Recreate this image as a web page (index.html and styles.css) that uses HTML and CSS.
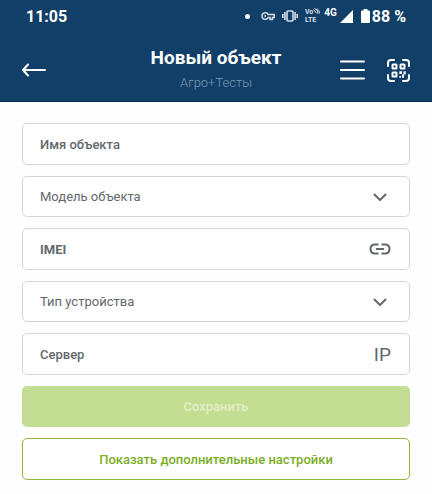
FILE: index.html
```html
<!DOCTYPE html>
<html lang="ru">
<head>
    <meta charset="UTF-8">
    <meta name="viewport" content="width=device-width, initial-scale=1.0">
    <title>Новый объект</title>
    <link rel="stylesheet" href="styles.css">
</head>
<body>
    <header class="header">
        <div class="status-bar">
            <time class="clock">11:05</time>
            <div class="status-icons">
                <span class="dot"></span>
                <svg class="key" width="14" height="10" viewBox="0 0 14 10" fill="none" stroke="currentColor" stroke-width="1.5">
                    <path d="M7.2 3.6A3.3 3.3 0 1 0 7.2 6.4H9V8.4H11.5V6.4H13.2V3.6Z"/>
                    <circle cx="4.1" cy="5" r="1" fill="currentColor" stroke="none"/>
                </svg>
                <svg class="vibrate" width="16" height="12" viewBox="0 0 16 12" fill="none" stroke="currentColor" stroke-width="1.6">
                    <rect x="5" y="1" width="6" height="10" rx="1"/>
                    <path d="M2.9 2V10M13.1 2V10M.8 4V8M15.2 4V8"/>
                </svg>
                <span class="volte">
                    <span>Vo<svg width="7" height="6" viewBox="0 0 7 6" fill="none" stroke="currentColor"><path d="M.5 1.5L4 5.5M1.5 .5Q5 1 5 5.5M4 .5Q6.5 2 6.5 5.5"/></svg></span>
                    <span>LTE</span>
                </span>
                <span class="network">4G</span>
                <svg class="signal" width="13" height="13" viewBox="0 0 13 13" fill="currentColor">
                    <path d="M13 0V13H0Z"/>
                </svg>
                <svg class="battery" width="9" height="14" viewBox="0 0 9 14" fill="currentColor">
                    <path d="M2.5 0H6.5V1.5H8Q9 1.5 9 2.5V13Q9 14 8 14H1Q0 14 0 13V2.5Q0 1.5 1 1.5H2.5Z"/>
                </svg>
                <span class="percent">88 %</span>
            </div>
        </div>
        <nav class="toolbar">
            <button type="button" class="icon-btn" aria-label="Назад">
                <svg width="24" height="14" viewBox="0 0 24 14" fill="none" stroke="currentColor" stroke-width="2" stroke-linecap="round" stroke-linejoin="round">
                    <path d="M23 7H1.2M6 1.5L1 7L6 12.5"/>
                </svg>
            </button>
            <div class="heading">
                <h1>Новый объект</h1>
                <p>Агро+Тесты</p>
            </div>
            <div class="actions">
                <button type="button" class="icon-btn" aria-label="Меню">
                    <svg width="25" height="20" viewBox="0 0 25 20" stroke="currentColor" stroke-width="2" stroke-linecap="round">
                        <path d="M1 1.5H24M1 10H24M1 18.5H24"/>
                    </svg>
                </button>
                <button type="button" class="icon-btn" aria-label="Сканировать QR-код">
                    <svg width="23" height="23" viewBox="0 0 23 23" fill="none" stroke="currentColor" stroke-width="2" stroke-linecap="round">
                        <path d="M1 7V4Q1 1 4 1H7M16 1H19Q22 1 22 4V7M22 16V19Q22 22 19 22H16M7 22H4Q1 22 1 19V16"/>
                        <rect x="5.5" y="5.5" width="4" height="4" rx=".5"/>
                        <rect x="13.5" y="5.5" width="4" height="4" rx=".5"/>
                        <rect x="5.5" y="13.5" width="4" height="4" rx=".5"/>
                        <path d="M12.3 12.3H15V15H12.3ZM16.5 12.3H18.7V15.5H16.5ZM12.3 17H14V18.7H12.3ZM15 15.5H17V18.7H15Z" fill="currentColor" stroke="none"/>
                    </svg>
                </button>
            </div>
        </nav>
    </header>

    <form class="form">
        <div class="field">
            <input type="text" id="name" placeholder="Имя объекта" aria-label="Имя объекта">
        </div>
        <div class="field field-select">
            <select id="model" aria-label="Модель объекта">
                <option value="">Модель объекта</option>
            </select>
            <svg class="field-icon" width="22" height="14" viewBox="0 0 22 14" fill="none" stroke="currentColor" stroke-width="2" stroke-linecap="round" stroke-linejoin="round">
                <path d="M5.5 4.5L11 10L16.5 4.5"/>
            </svg>
        </div>
        <div class="field">
            <input type="text" id="imei" class="imei" placeholder="IMEI" aria-label="IMEI">
            <svg class="field-icon" width="22" height="14" viewBox="0 0 22 14" fill="none" stroke="currentColor" stroke-width="2">
                <path d="M9.5 2.5H6Q1.5 2.5 1.5 7T6 11.5H9.5M12.5 2.5H16Q20.5 2.5 20.5 7T16 11.5H12.5M7 7H15"/>
            </svg>
        </div>
        <div class="field field-select">
            <select id="device" aria-label="Тип устройства">
                <option value="">Тип устройства</option>
            </select>
            <svg class="field-icon" width="22" height="14" viewBox="0 0 22 14" fill="none" stroke="currentColor" stroke-width="2" stroke-linecap="round" stroke-linejoin="round">
                <path d="M5.5 4.5L11 10L16.5 4.5"/>
            </svg>
        </div>
        <div class="field">
            <input type="text" id="server" placeholder="Сервер" aria-label="Сервер">
            <span class="field-icon ip">IP</span>
        </div>
        <button type="submit" class="btn btn-save" disabled>Сохранить</button>
        <button type="button" class="btn btn-more">Показать дополнительные настройки</button>
    </form>
</body>
</html>
```
FILE: styles.css
```css
* {
    box-sizing: border-box;
}
body {
    margin: 0;
    font-family: Roboto, sans-serif;
    font-size: 13px;
    color: #63686d;
    background-color: #fefefe;
}
button, input, select {
    font: inherit;
}
.header {
    color: #fff;
    background-color: #123f68;
    border-bottom: 1px solid #052c50;
}
.status-bar {
    display: flex;
    align-items: center;
    justify-content: space-between;
    height: 32px;
    padding: 0 26px;
    font-size: 16px;
    font-weight: bold;
}
.status-icons {
    display: flex;
    align-items: center;
}
.dot {
    width: 5px;
    height: 5px;
    margin-right: 11px;
    border-radius: 50%;
    background: #fff;
}
.key, .vibrate {
    margin-right: 7px;
    color: #d3dee8;
}
.volte {
    display: flex;
    flex-direction: column;
    margin-right: 4px;
    font-size: 7px;
    line-height: 8px;
    color: #d3dee8;
}
.network {
    margin-right: 3px;
    padding-bottom: 6px;
    font-size: 10px;
    line-height: 12px;
}
.signal {
    margin-right: 8px;
}
.battery {
    margin-right: 2px;
}
.toolbar {
    display: grid;
    grid-template-columns: 1fr auto 1fr;
    align-items: center;
    height: 69px;
    padding: 7px 22px 0;
}
.icon-btn {
    display: flex;
    justify-self: start;
    padding: 0;
    border: none;
    color: inherit;
    background: none;
    cursor: pointer;
}
.heading {
    text-align: center;
}
.heading h1 {
    margin: 0;
    font-size: 19px;
    line-height: 26px;
}
.heading p {
    margin: 0;
    font-size: 13px;
    font-weight: 300;
    line-height: 24px;
    color: #7d9ab4;
}
.actions {
    display: flex;
    align-items: center;
    justify-content: flex-end;
    gap: 22px;
}
.form {
    display: flex;
    flex-direction: column;
    gap: 11px;
    padding: 21px 22px;
}
.field {
    display: flex;
    align-items: center;
    height: 42px;
    padding: 0 18px 0 17px;
    border: 1px solid #d6d6d6;
    border-radius: 5px;
    background: #fff;
}
.field-select {
    height: 41px;
}
.field input, .field select {
    flex: 1;
    min-width: 0;
    padding: 0;
    border: none;
    outline: none;
    color: inherit;
    background: none;
    appearance: none;
}
.field input {
    font-weight: 500;
}
.field .imei {
    font-weight: bold;
}
.field input::placeholder {
    color: inherit;
}
.field-icon {
    flex: none;
}
.ip {
    font-size: 19px;
}
.btn {
    height: 41px;
    border: none;
    border-radius: 5px;
    font-weight: 500;
    cursor: pointer;
}
.btn-save {
    color: #e0efc6;
    background-color: #c3dd93;
}
.btn-more {
    height: 42px;
    border: 1px solid #8fb83f;
    color: #7aae24;
    background-color: #fff;
}
```
